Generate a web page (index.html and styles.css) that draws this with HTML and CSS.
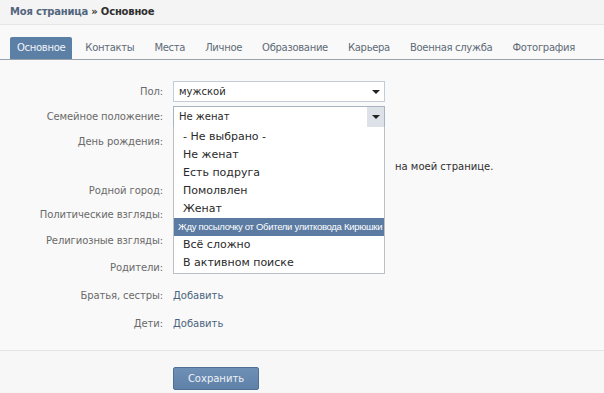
FILE: index.html
```html
<!DOCTYPE html>
<html lang="ru">
<head>
<meta charset="utf-8">
<link rel="stylesheet" href="styles.css">
</head>
<body>
<div class="page">
  <div class="crumbs"><span class="crumb-link">Моя страница</span> <span class="crumb-cur">» Основное</span></div>
  <div class="tabs">
    <span class="tab active">Основное</span>
    <span class="tab">Контакты</span>
    <span class="tab">Места</span>
    <span class="tab">Личное</span>
    <span class="tab">Образование</span>
    <span class="tab">Карьера</span>
    <span class="tab">Военная служба</span>
    <span class="tab">Фотография</span>
  </div>
  <div class="form">
    <div class="row h25">
      <div class="label">Пол:</div>
      <div class="field"><div class="select"><span>мужской</span><span class="arrow"></span></div></div>
    </div>
    <div class="row h25">
      <div class="label">Семейное положение:</div>
      <div class="field">
        <div class="select open"><span>Не женат</span><span class="arrow"></span></div>
        <ul class="dropdown">
          <li>- Не выбрано -</li>
          <li>Не женат</li>
          <li>Есть подруга</li>
          <li>Помолвлен</li>
          <li>Женат</li>
          <li class="hl">Жду посылочку от Обители улитковода Кирюшки</li>
          <li>Всё сложно</li>
          <li>В активном поиске</li>
        </ul>
      </div>
    </div>
    <div class="row h25">
      <div class="label">День рождения:</div>
      <div class="field"></div>
    </div>
    <div class="row h25">
      <div class="label"></div>
      <div class="field"><span class="spacer"></span><span class="note">на моей странице.</span></div>
    </div>
    <div class="row h22">
      <div class="label">Родной город:</div>
      <div class="field"></div>
    </div>
    <div class="row h26">
      <div class="label">Политические взгляды:</div>
      <div class="field"></div>
    </div>
    <div class="row h26">
      <div class="label">Религиозные взгляды:</div>
      <div class="field"></div>
    </div>
    <div class="row h28">
      <div class="label">Родители:</div>
      <div class="field"></div>
    </div>
    <div class="row h28">
      <div class="label">Братья, сестры:</div>
      <div class="field"><span class="link">Добавить</span></div>
    </div>
    <div class="row h28">
      <div class="label">Дети:</div>
      <div class="field"><span class="link">Добавить</span></div>
    </div>
  </div>
  <div class="footer">
    <button class="save">Сохранить</button>
  </div>
</div>
</body>
</html>
```
FILE: styles.css
```css
html, body {
  margin: 0;
  padding: 0;
  background: #f7f7f7;
}
body {
  font-family: "DejaVu Sans", Verdana, sans-serif;
  font-size: 10px;
  color: #333;
}
.page {
  width: 604px;
  height: 393px;
  overflow: hidden;
}
.crumbs {
  height: 25px;
  box-sizing: border-box;
  padding: 6px 0 0 10px;
  font-weight: bold;
  font-size: 10px;
  letter-spacing: -0.2px;
  background: #f4f4f4;
  border-bottom: 1px solid #e6e6e6;
  white-space: nowrap;
}
.crumb-link { color: #52667d; }
.crumb-cur { color: #2f2f2f; }
.tabs {
  display: flex;
  align-items: flex-end;
  height: 35px;
  box-sizing: border-box;
  padding: 12px 0 0 10px;
  border-bottom: 1px solid #9aa3ad;
  background: #f9f9f9;
}
.tab {
  flex: none;
  white-space: nowrap;
  height: 22px;
  line-height: 22px;
  padding: 0 7px;
  margin-right: 6px;
  color: #5f6b77;
  font-size: 10px;
  letter-spacing: -0.3px;
}
.tab.active {
  background: #5c7fa6;
  color: #f2f5f9;
  border-radius: 2px 2px 0 0;
}
.form {
  padding-top: 19px;
  padding-bottom: 13px;
  border-bottom: 1px solid #e4e4e4;
  background: #f9f9f9;
}
.row {
  display: flex;
  align-items: center;
}
.h22 { height: 22px; }
.h25 { height: 25px; }
.h26 { height: 26px; }
.h28 { height: 28px; }
.label {
  width: 163px;
  text-align: right;
  color: #6a6a6a;
  flex: none;
  white-space: nowrap;
  letter-spacing: -0.1px;
}
.field {
  margin-left: 10px;
  position: relative;
  display: flex;
  align-items: center;
  height: 100%;
}
.select {
  width: 212px;
  height: 21px;
  box-sizing: border-box;
  border: 1px solid #c3ccd6;
  background: #fff;
  display: flex;
  align-items: center;
  justify-content: space-between;
  padding-left: 5px;
  color: #2a2a2a;
}
.arrow {
  width: 17px;
  height: 100%;
  display: flex;
  align-items: center;
  justify-content: center;
}
.arrow::before {
  content: "";
  border-left: 4px solid transparent;
  border-right: 4px solid transparent;
  border-top: 4px solid #222;
}
.select.open {
  height: 22px;
  border-color: #aab4bf;
}
.select.open .arrow {
  background: #dde2e8;
}
.dropdown {
  position: absolute;
  top: 23px;
  left: 0;
  z-index: 2;
  width: 212px;
  box-sizing: border-box;
  margin: 0;
  padding: 1px 0 1px 0;
  list-style: none;
  background: #fff;
  border: 1px solid #b9c0c8;
  border-top: none;
}
.dropdown li {
  height: 18px;
  line-height: 18px;
  padding-left: 9px;
  font-size: 11px;
  color: #2a2a2a;
  white-space: nowrap;
}
.dropdown li.hl {
  background: #5b7ba2;
  color: #fff;
  padding-left: 4px;
  font-family: "Liberation Sans", Arial, sans-serif;
  font-size: 9.5px;
  letter-spacing: -0.3px;
}
.spacer {
  width: 212px;
  flex: none;
}
.note {
  margin-left: 10px;
  color: #2f2f2f;
  white-space: nowrap;
}
.link {
  color: #4a6480;
}
.footer {
  padding: 16px 0 0 173px;
}
.save {
  width: 86px;
  height: 23px;
  border: 1px solid #4f6f95;
  border-radius: 2px;
  background: linear-gradient(#6f90b6, #5f80a7);
  color: #eef2f7;
  font-family: "DejaVu Sans", Verdana, sans-serif;
  font-size: 10px;
  padding: 0;
}
```
